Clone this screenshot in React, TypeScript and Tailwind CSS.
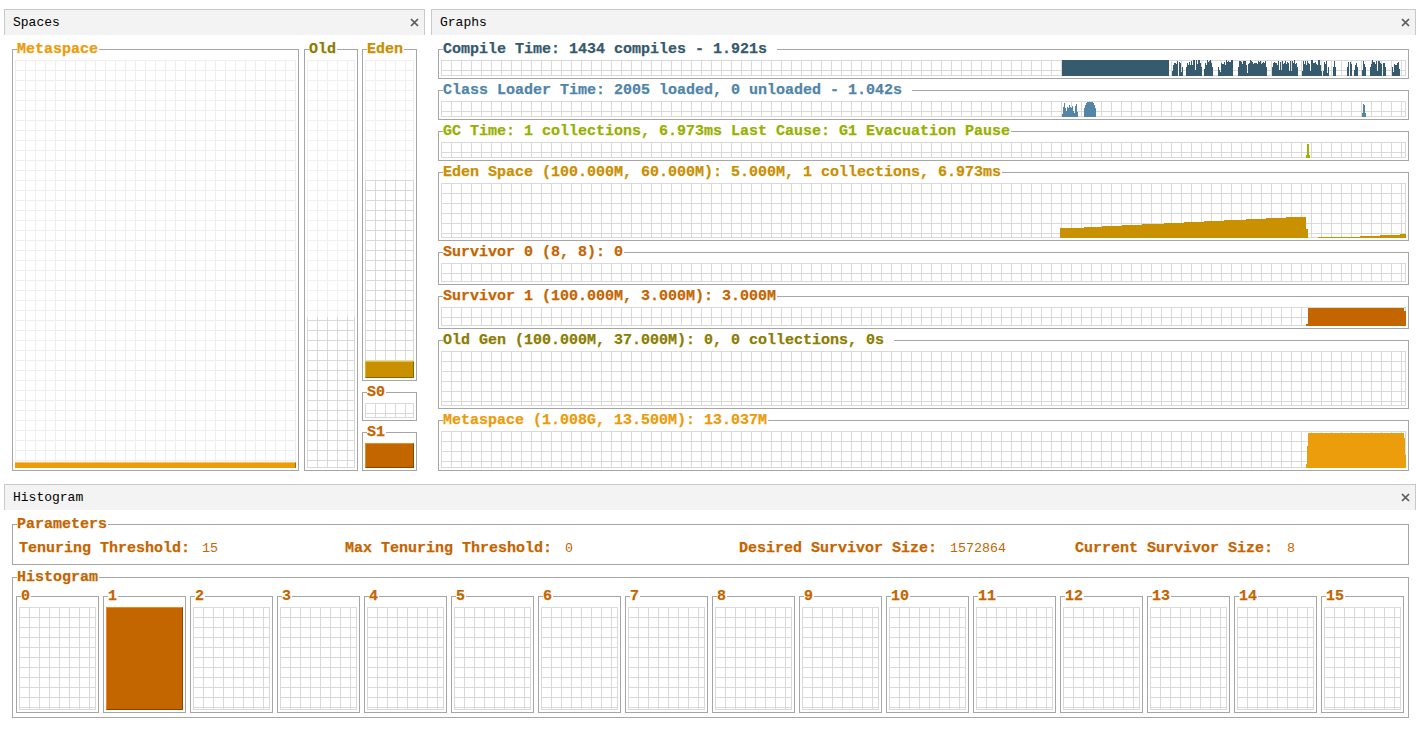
import React from "react";

const GRID_D =
  "bg-[linear-gradient(#d9d9d9_1px,transparent_1px),linear-gradient(90deg,#d9d9d9_1px,transparent_1px)] bg-size-[10px_10px] border-r border-b border-[#d9d9d9]";
const GRID_L =
  "bg-[linear-gradient(#eeeeee_1px,transparent_1px),linear-gradient(90deg,#eeeeee_1px,transparent_1px)] bg-size-[10px_10px] border-r border-b border-[#eeeeee]";
const GRID_L_TOP =
  "bg-[linear-gradient(#f0f0f0_1px,transparent_1px),linear-gradient(90deg,#f0f0f0_1px,transparent_1px)] bg-size-[10px_10px] border-r border-[#f0f0f0]";

function rng(seed: number) {
  let s = seed;
  return () => {
    s = (s * 16807) % 2147483647;
    return s / 2147483647;
  };
}

function CloseX() {
  return (
    <svg width="9" height="9" viewBox="0 0 9 9" className="shrink-0">
      <path d="M1 1L8 8M8 1L1 8" stroke="#5a5a5a" strokeWidth="1.7" />
    </svg>
  );
}

function PanelHeader({ title }: { title: string }) {
  return (
    <div className="h-[26px] flex items-center justify-between border-t border-l border-r border-[#c9c9c9] bg-[#f3f3f3] pl-[8px] pr-[5px] text-[13px] text-black">
      <span>{title}</span>
      <CloseX />
    </div>
  );
}

function Box({
  title,
  color,
  className = "",
  flat = false,
  children,
}: {
  title: string;
  color: string;
  className?: string;
  flat?: boolean;
  children: React.ReactNode;
}) {
  return (
    <fieldset className={`border border-[#a6a6a6] px-[2px] min-w-0 ${flat ? "pb-0" : "pb-[2px]"} ${className}`}>
      <legend className={`ml-[2px] pr-[1px] pt-[2px] text-[15px] leading-[14px] font-bold whitespace-pre [-webkit-text-stroke:0.25px_currentColor] ${color}`}>
        {title}
      </legend>
      <div className={flat ? "" : "mt-[3px]"}>{children}</div>
    </fieldset>
  );
}

type Step = [number, number];

function StepRects({
  steps,
  end,
  top,
  h,
  fill,
}: {
  steps: Step[];
  end: number;
  top: number;
  h: number;
  fill: string;
}) {
  return (
    <>
      {steps.map(([x, y], i) => {
        const nx = i < steps.length - 1 ? steps[i + 1][0] : end;
        const ly = Math.max(0, y - top);
        return <rect key={i} x={x - 441} y={ly} width={nx - x} height={h - ly} fill={fill} />;
      })}
    </>
  );
}

function Chart({ h, children }: { h: number; children?: React.ReactNode }) {
  return (
    <div className={`relative ${GRID_D}`} style={{ height: h }}>
      {children ? (
        <svg width={965} height={h} className="absolute left-0 top-0" shapeRendering="crispEdges">
          {children}
        </svg>
      ) : null}
    </div>
  );
}

function compileBars() {
  const r = rng(11);
  const out: React.ReactNode[] = [];
  const fill = "#365a6e";
  const clusters: Step[] = [
    [1172, 1183],
    [1186, 1202],
    [1204, 1213],
    [1218, 1235],
    [1238, 1267],
    [1272, 1298],
    [1302, 1322],
    [1323, 1329],
    [1333, 1336],
    [1347, 1358],
    [1362, 1366],
    [1370, 1386],
    [1392, 1400],
  ];
  out.push(<rect key="solid" x={1062 - 441} y={0} width={1169 - 1062} height={16} fill={fill} />);
  clusters.forEach(([a, b], ci) => {
    for (let x = a; x < b; x++) {
      const v = r();
      let h: number;
      if (v < 0.12) h = Math.round(3 + r() * 4);
      else if (v < 0.16) h = 0;
      else h = Math.round(11 + r() * 5);
      if (x === a || x === b - 1) h = Math.min(h, 9);
      if (h > 0)
        out.push(<rect key={`${ci}-${x}`} x={x - 441} y={16 - h} width={1} height={h} fill={fill} />);
    }
  });
  return out;
}

function classBars() {
  const r = rng(31);
  const out: React.ReactNode[] = [];
  const fill = "#5386a6";
  for (let x = 1062; x < 1078; x++) {
    const v = r();
    const h = v < 0.3 ? Math.round(3 + r() * 3) : Math.round(9 + r() * 6);
    out.push(<rect key={`a${x}`} x={x - 441} y={16 - h} width={1} height={h} fill={fill} />);
  }
  const hump = [9, 12, 14, 15, 15, 15, 15, 15, 15, 14, 12, 9];
  hump.forEach((h, i) =>
    out.push(<rect key={`b${i}`} x={1084 + i - 441} y={16 - h} width={1} height={h} fill={fill} />)
  );
  [4, 13, 12, 4].forEach((h, i) =>
    out.push(<rect key={`c${i}`} x={1362 + i - 441} y={16 - h} width={1} height={h} fill={fill} />)
  );
  return out;
}

function Param({ label, value, gap }: { label: string; value: string; gap: string }) {
  return (
    <div className="flex items-baseline whitespace-pre">
      <span className="text-[15px] font-bold text-[#c46600] [-webkit-text-stroke:0.25px_currentColor]">{label}</span>
      <span className={`${gap} text-[13.33px] text-[#c46600]`}>{value}</span>
    </div>
  );
}

export default function App() {
  const edenSteps: Step[] = [
    [1060, 228],
    [1084, 227],
    [1102, 226],
    [1122, 225],
    [1142, 224],
    [1164, 223],
    [1184, 222],
    [1204, 221],
    [1224, 220],
    [1246, 219],
    [1266, 218],
    [1286, 217],
    [1306, 229],
  ];
  const edenSteps2: Step[] = [
    [1318, 237],
    [1360, 236],
    [1380, 235],
    [1400, 234],
  ];
  const metaSteps: Step[] = [
    [1306, 464],
    [1307, 446],
    [1308, 433],
    [1404, 438],
    [1405, 455],
  ];
  const s1Steps: Step[] = [
    [1306, 324],
    [1308, 308],
    [1404, 311],
  ];

  const ages = Array.from({ length: 16 }, (_, i) => i);

  return (
    <div className="font-['Liberation_Mono',monospace] bg-white w-[1419px] h-[729px] pt-[9px] pl-[4px]">
      {/* top row */}
      <div className="flex">
        {/* Spaces */}
        <div className="w-[421px] flex flex-col">
          <PanelHeader title="Spaces" />
          <div className="flex pt-[6px] pl-[8px]">
            <Box title="Metaspace" color="text-[#ec9c0a]" className="w-[287px]">
              <div className={`relative h-[408px] ${GRID_L}`}>
                <div className="absolute left-0 right-[-1px] bottom-[-1px] h-[6px] bg-[#ec9c0a] border-t border-t-[#f8c457] border-r border-r-[#a86c00]" />
              </div>
            </Box>
            <Box title="Old" color="text-[#8b7d00]" className="ml-[5px] w-[54px]">
              <div className="h-[408px] flex flex-col">
                <div className={`h-[257px] ${GRID_L_TOP}`} />
                <div className={`flex-1 ${GRID_D} bg-position-[0_3px]`} />
              </div>
            </Box>
            <div className="ml-[4px] w-[55px] flex flex-col gap-[3px]">
              <Box title="Eden" color="text-[#c99000]">
                <div className="h-[318px] flex flex-col">
                  <div className={`h-[120px] ${GRID_L_TOP}`} />
                  <div className={`relative flex-1 ${GRID_D}`}>
                    <div className="absolute left-0 right-[-1px] bottom-[-1px] h-[17px] bg-[#c99000] border-t border-l border-t-[#f0c020] border-l-[#e6b010] border-r border-b border-r-[#8c6400] border-b-[#8c6400]" />
                  </div>
                </div>
              </Box>
              <Box title="S0" color="text-[#c46600]">
                <div className={`h-[15px] ${GRID_D}`} />
              </Box>
              <Box title="S1" color="text-[#c46600]">
                <div className={`relative h-[25px] ${GRID_D}`}>
                  <div className="absolute left-0 right-[-1px] bottom-[-1px] top-0 bg-[#c46600] border-t border-l border-t-[#ea8a22] border-l-[#ea8a22] border-r border-b border-r-[#8a4500] border-b-[#8a4500]" />
                </div>
              </Box>
            </div>
          </div>
        </div>

        {/* Graphs */}
        <div className="ml-[6px] w-[985px] flex flex-col">
          <PanelHeader title="Graphs" />
          <div className="flex flex-col gap-[3px] pt-[6px] pl-[7px] pr-[7px]">
            <Box title="Compile Time: 1434 compiles - 1.921s " color="text-[#355a6e]">
              <Chart h={16}>{compileBars()}</Chart>
            </Box>
            <Box title="Class Loader Time: 2005 loaded, 0 unloaded - 1.042s " color="text-[#4f85a8]">
              <Chart h={16}>{classBars()}</Chart>
            </Box>
            <Box title="GC Time: 1 collections, 6.973ms Last Cause: G1 Evacuation Pause" color="text-[#98b000]">
              <Chart h={16}>
                <rect x={1306 - 441} y={13} width={4} height={3} fill="#9cb200" />
                <rect x={1307 - 441} y={2} width={2} height={14} fill="#9cb200" />
              </Chart>
            </Box>
            <Box title="Eden Space (100.000M, 60.000M): 5.000M, 1 collections, 6.973ms" color="text-[#c99000]">
              <Chart h={55}>
                <StepRects steps={edenSteps} end={1308} top={183} h={55} fill="#c99100" />
                <StepRects steps={edenSteps2} end={1406} top={183} h={55} fill="#c99100" />
              </Chart>
            </Box>
            <Box title="Survivor 0 (8, 8): 0" color="text-[#c46600]">
              <Chart h={19} />
            </Box>
            <Box title="Survivor 1 (100.000M, 3.000M): 3.000M" color="text-[#c46600]">
              <Chart h={19}>
                <StepRects steps={s1Steps} end={1406} top={307} h={19} fill="#c46600" />
              </Chart>
            </Box>
            <Box title="Old Gen (100.000M, 37.000M): 0, 0 collections, 0s " color="text-[#8b7d00]">
              <Chart h={55} />
            </Box>
            <Box title="Metaspace (1.008G, 13.500M): 13.037M" color="text-[#ec9c0a]">
              <Chart h={37}>
                <StepRects steps={metaSteps} end={1406} top={431} h={37} fill="#ec9d0b" />
              </Chart>
            </Box>
          </div>
        </div>
      </div>

      {/* Histogram */}
      <div className="mt-[13px] w-[1412px] flex flex-col">
        <PanelHeader title="Histogram" />
        <div className="flex flex-col gap-[4px] pt-[6px] pl-[8px] pr-[7px]">
          <Box title="Parameters" color="text-[#c46600]" flat>
            <div className="h-[32px] pt-[2px] pl-[4px] grid grid-cols-[326px_394px_336px_1fr] items-center">
              <Param label="Tenuring Threshold:" value="15" gap="ml-[12px]" />
              <Param label="Max Tenuring Threshold:" value="0" gap="ml-[13px]" />
              <Param label="Desired Survivor Size:" value="1572864" gap="ml-[13px]" />
              <Param label="Current Survivor Size:" value="8" gap="ml-[14px]" />
            </div>
          </Box>
          <Box title="Histogram" color="text-[#c46600]">
            <div className="flex gap-[4px] pl-[1px] pb-[2px]">
              {ages.map((a) => (
                <Box key={a} title={String(a)} color="text-[#c46600]" className="w-[83px]">
                  <div className={`relative h-[103px] ${GRID_D}`}>
                    {a === 1 ? (
                      <div className="absolute left-0 top-0 right-[-1px] bottom-[-1px] bg-[#c46600] border-t border-l border-t-[#ea8a22] border-l-[#ea8a22] border-r border-b border-r-[#8a4500] border-b-[#8a4500]" />
                    ) : null}
                  </div>
                </Box>
              ))}
            </div>
          </Box>
        </div>
      </div>
    </div>
  );
}
